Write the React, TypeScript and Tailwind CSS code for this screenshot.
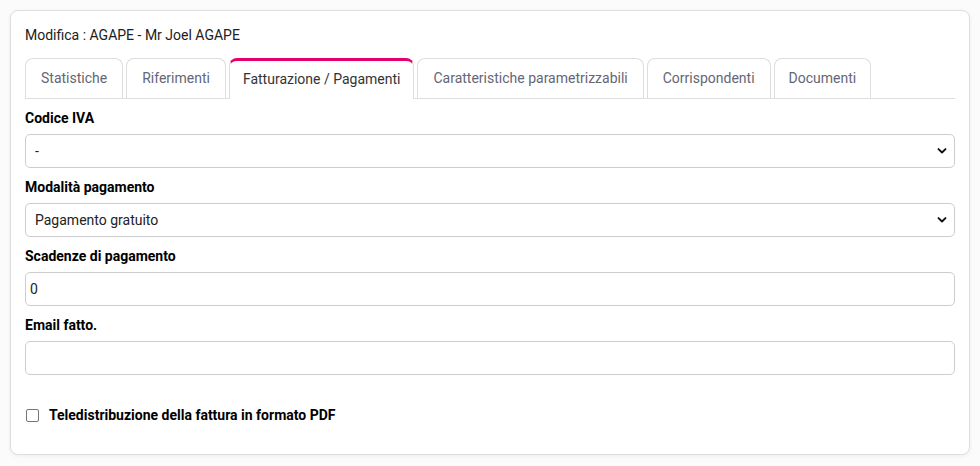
import React from "react";

const Chevron = () => (
  <svg
    className="pointer-events-none absolute right-[8px] top-1/2 -translate-y-1/2"
    width="10"
    height="7"
    viewBox="0 0 10 7"
    fill="none"
  >
    <path d="M1.5 1.6 L5 5 L8.5 1.6" stroke="#111" strokeWidth="1.9" strokeLinecap="round" strokeLinejoin="round" />
  </svg>
);

const tabs = [
  "Statistiche",
  "Riferimenti",
  "Fatturazione / Pagamenti",
  "Caratteristiche parametrizzabili",
  "Corrispondenti",
  "Documenti",
];

export default function App() {
  return (
    <div
      className="min-h-[466px] w-[980px] bg-[#fbfbfb] p-[10px] pb-[11px]"
      style={{ fontFamily: "Roboto, 'Liberation Sans', sans-serif" }}
    >
      <div className="h-[445px] rounded-[8px] border border-[#dedede] bg-white px-[14px] pt-[14px] shadow-[0_1px_4px_rgba(0,0,0,0.06)]">
        <div className="h-[20px] text-[14px] leading-[20px] text-[#212121]">Modifica : AGAPE - Mr Joel AGAPE</div>

        <div className="mt-[13px] flex h-[41px] items-end gap-[3px] border-b border-[#dedede]">
          {tabs.map((t, i) =>
            i === 2 ? (
              <div
                key={t}
                className="relative -mb-px flex h-[41px] items-center rounded-t-[8px] border-x border-t-[3px] border-x-[#dedede] border-t-[#e6006f] bg-white px-[13px] pb-[1px] text-[14px] text-[#333]"
              >
                {t}
              </div>
            ) : i === 5 ? (
              <div
                key={t}
                className="flex h-[40px] items-center rounded-t-[8px] border-x border-t border-[#dedede] px-[14px] text-[14px] text-[#646675]"
              >
                {t}
              </div>
            ) : (
              <div
                key={t}
                className="flex h-[40px] items-center rounded-t-[8px] border-x border-t border-[#dedede] px-[15px] text-[14px] text-[#646675]"
              >
                {t}
              </div>
            )
          )}
        </div>

        <div className="pt-[9px] text-[14px]">
          <div className="mb-[6px] h-[20px] font-bold leading-[20px] text-black">Codice IVA</div>
          <div className="relative">
            <select className="h-[34px] w-full appearance-none rounded-[5px] border border-[#cdcdcd] bg-white px-[9px] text-[14px] text-[#222] outline-none">
              <option>-</option>
            </select>
            <Chevron />
          </div>

          <div className="mb-[6px] mt-[9px] h-[20px] font-bold leading-[20px] text-black">Modalità pagamento</div>
          <div className="relative">
            <select className="h-[34px] w-full appearance-none rounded-[5px] border border-[#cdcdcd] bg-white px-[9px] text-[14px] text-[#222] outline-none">
              <option>Pagamento gratuito</option>
            </select>
            <Chevron />
          </div>

          <div className="mb-[6px] mt-[9px] h-[20px] font-bold leading-[20px] text-black">Scadenze di pagamento</div>
          <input
            readOnly
            value="0"
            className="block h-[34px] w-full rounded-[5px] border border-[#cdcdcd] bg-white px-[4px] text-[14px] text-[#222] outline-none"
          />

          <div className="mb-[6px] mt-[9px] h-[20px] font-bold leading-[20px] text-black">Email fatto.</div>
          <input
            readOnly
            value=""
            className="block h-[34px] w-full rounded-[5px] border border-[#cdcdcd] bg-white px-[4px] text-[14px] text-[#222] outline-none"
          />

          <div className="mt-[30px] flex h-[20px] items-center">
            <span className="ml-[1px] block h-[13px] w-[13px] rounded-[2px] border border-[#767676] bg-white" />
            <span className="ml-[10px] font-bold text-black">Teledistribuzione della fattura in formato PDF</span>
          </div>
        </div>
      </div>
    </div>
  );
}
